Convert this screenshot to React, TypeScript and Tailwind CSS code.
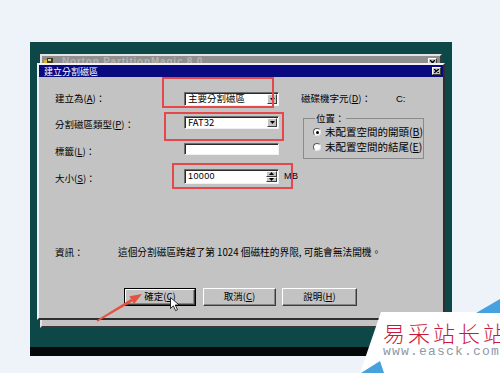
import React from "react";

const raised =
  "border border-t-white border-l-white border-b-[#3c3c3c] border-r-[#3c3c3c]";
const sunken =
  "border border-t-[#6e6e6e] border-l-[#6e6e6e] border-b-[#f0f0f0] border-r-[#f0f0f0] shadow-[inset_1px_1px_0_#2a2a2a]";

function DownBtn() {
  return (
    <span
      className={`w-[10px] m-[1px] shrink-0 bg-[#c3c3c3] flex items-center justify-center ${raised}`}
    >
      <svg width="5" height="3" viewBox="0 0 5 3">
        <path d="M0 0h5L2.5 3z" fill="#000" />
      </svg>
    </span>
  );
}

function Combo({ text }: { text: string }) {
  return (
    <div className={`w-[95px] h-full shrink-0 flex bg-white ${sunken}`}>
      <span className="flex-1 pl-[3px] text-[9.5px] leading-none self-center whitespace-nowrap">
        {text}
      </span>
      <DownBtn />
    </div>
  );
}

function Label({
  children,
  shift,
}: {
  children: React.ReactNode;
  shift?: boolean;
}) {
  return (
    <span
      className={`w-[129px] shrink-0 text-[9.5px] leading-none whitespace-nowrap ${
        shift ? "pt-[5px]" : ""
      }`}
    >
      {children}
    </span>
  );
}

function Radio({ on, children }: { on?: boolean; children: React.ReactNode }) {
  return (
    <div className="h-[14px] flex items-center">
      <span className="w-[8px] h-[8px] shrink-0 rounded-full bg-white border border-t-[#5a5a5a] border-l-[#5a5a5a] border-b-[#e8e8e8] border-r-[#e8e8e8] flex items-center justify-center">
        {on && <span className="w-[3px] h-[3px] rounded-full bg-black" />}
      </span>
      <span className="ml-[4px] text-[10.5px] leading-none whitespace-nowrap">
        {children}
      </span>
    </div>
  );
}

function Button({
  children,
  w,
  def,
  className = "",
}: {
  children: React.ReactNode;
  w: string;
  def?: boolean;
  className?: string;
}) {
  return (
    <div
      className={`${w} h-[18px] shrink-0 ${
        def ? "border border-black" : ""
      } ${className}`}
    >
      <div
        className={`h-full flex items-center justify-center bg-[#c3c3c3] ${raised} shadow-[inset_-1px_-1px_0_#858585]`}
      >
        <span className="text-[9.5px] leading-none whitespace-nowrap">
          {children}
        </span>
      </div>
    </div>
  );
}

export default function App() {
  return (
    <div className="relative w-[500px] h-[373px] overflow-hidden bg-[#edf3f9] font-['Noto_Sans_CJK_TC','Noto_Sans',sans-serif] text-black">
      <div className="pt-[42px] pl-[30px]">
        <div className="relative w-[422px] h-[305px] bg-[#0e4747]">
          {/* back window */}
          <div className="absolute left-[10px] top-[12px] w-[402px] h-[274px] bg-[#c3c3c3] border-2 border-t-[#e4e4e4] border-l-[#e4e4e4] border-b-[#383838] border-r-[#383838]">
            <div className="h-[12px] bg-[#8f8f8f] flex items-center px-[2px]">
              <svg width="9" height="8" viewBox="0 0 9 8">
                <rect x="0" y="2" width="5" height="5" fill="#d9b830" />
                <rect x="3" y="0" width="6" height="5" fill="#3b3b2a" />
                <rect x="4" y="1" width="3" height="2" fill="#e9d27a" />
              </svg>
              <span className="ml-[9px] text-[10px] leading-none text-[#b3b3b3] font-['Liberation_Sans',sans-serif] font-bold tracking-[0.8px] whitespace-nowrap">
                Norton PartitionMagic 8.0
              </span>
              <span
                className={`ml-auto mr-[1px] w-[9px] h-[9px] bg-[#c3c3c3] flex items-center justify-center ${raised}`}
              >
                <svg width="5" height="5" viewBox="0 0 5 5">
                  <path d="M0 0L5 5M5 0L0 5" stroke="#000" strokeWidth="1.3" />
                </svg>
              </span>
            </div>
          </div>

          {/* dialog */}
          <div className="absolute left-[7px] top-[21px] w-[408px] h-[257px] bg-[#c3c3c3] border-2 border-t-[#f2f2f2] border-l-[#f2f2f2] border-b-[#2e2e2e] border-r-[#2e2e2e] flex flex-col">
            <div className="h-[12px] shrink-0 bg-[#0a0a80] flex items-center pl-[5px] pr-[2px]">
              <span className="text-white text-[9px] leading-none whitespace-nowrap">
                建立分割磁區
              </span>
              <span
                className={`ml-auto w-[9px] h-[8px] bg-[#c3c3c3] flex items-center justify-center ${raised}`}
              >
                <svg width="5" height="4" viewBox="0 0 5 4">
                  <path d="M0 0L5 4M5 0L0 4" stroke="#000" strokeWidth="1.3" />
                </svg>
              </span>
            </div>

            <div className="flex-1 pt-[15px] pl-[16px]">
              <div className="flex">
                {/* left column */}
                <div className="w-[224px] shrink-0 flex flex-col">
                  <div className="h-[14px] flex items-center">
                    <Label>
                      建立為(<u>A</u>)：
                    </Label>
                    <Combo text="主要分割磁區" />
                  </div>
                  <div className="mt-[10px] h-[13px] flex items-center">
                    <Label shift>
                      分割磁區類型(<u>P</u>)：
                    </Label>
                    <Combo text="FAT32" />
                  </div>
                  <div className="mt-[14px] h-[12px] flex items-center">
                    <Label shift>
                      標籤(<u>L</u>)：
                    </Label>
                    <div className={`w-[95px] h-full shrink-0 bg-white ${sunken}`} />
                  </div>
                  <div className="mt-[14px] h-[15px] flex items-center">
                    <Label shift>
                      大小(<u>S</u>)：
                    </Label>
                    <div className={`w-[95px] h-full shrink-0 flex bg-white ${sunken}`}>
                      <span className="flex-1 pl-[3px] text-[9px] leading-none self-center font-['Liberation_Sans',sans-serif] tracking-[0.4px]">
                        10000
                      </span>
                      <span className="w-[11px] shrink-0 m-[1px] flex flex-col">
                        <span className={`flex-1 bg-[#c3c3c3] flex items-center justify-center ${raised}`}>
                          <svg width="5" height="3" viewBox="0 0 5 3">
                            <path d="M0 3h5L2.5 0z" fill="#000" />
                          </svg>
                        </span>
                        <span className={`flex-1 bg-[#c3c3c3] flex items-center justify-center ${raised}`}>
                          <svg width="5" height="3" viewBox="0 0 5 3">
                            <path d="M0 0h5L2.5 3z" fill="#000" />
                          </svg>
                        </span>
                      </span>
                    </div>
                    <span className="ml-[5px] shrink-0 text-[9px] leading-none font-['Liberation_Sans',sans-serif] tracking-[0.5px]">
                      MB
                    </span>
                  </div>
                </div>

                {/* right column */}
                <div className="ml-[22px] flex flex-col">
                  <div className="h-[14px] flex items-center">
                    <span className="w-[95px] shrink-0 text-[9.5px] leading-none whitespace-nowrap">
                      磁碟機字元(<u>D</u>)：
                    </span>
                    <span className="text-[9.5px] leading-none font-['Liberation_Sans',sans-serif]">
                      C:
                    </span>
                  </div>
                  <fieldset className="mt-[6px] ml-[2px] w-[121px] border border-[#8b8b8b] pl-[9px] pb-[4px]">
                    <legend className="ml-[2px] px-[1px] text-[9.5px] leading-[12px]">
                      位置：
                    </legend>
                    <div className="pt-[1px] flex flex-col gap-[1px]">
                      <Radio on>
                        未配置空間的開頭(<u>B</u>)
                      </Radio>
                      <Radio>
                        未配置空間的結尾(<u>E</u>)
                      </Radio>
                    </div>
                  </fieldset>
                </div>
              </div>

              {/* info */}
              <div className="mt-[62px] h-[14px] flex items-center">
                <span className="w-[63px] shrink-0 text-[9.5px] leading-none">資訊：</span>
                <span className="text-[9.7px] leading-none whitespace-nowrap">
                  這個分割磁區跨越了第 1024 個磁柱的界限, 可能會無法開機。
                </span>
              </div>

              {/* buttons */}
              <div className="mt-[28px] ml-[69px] flex">
                <Button w="w-[72px]" def>
                  確定(<u>C</u>)
                </Button>
                <Button w="w-[73px]" className="ml-[7px]">
                  取消(<u>C</u>)
                </Button>
                <Button w="w-[75px]" className="ml-[6px]">
                  說明(<u>H</u>)
                </Button>
              </div>
            </div>

            {/* red annotation boxes */}
            <div className="absolute left-[123px] top-[12px] w-[112px] h-[31px] border-2 border-[#e4484d]" />
            <div className="absolute left-[125px] top-[47px] w-[120px] h-[29px] border-2 border-[#e4484d]" />
            <div className="absolute left-[133px] top-[98px] w-[121px] h-[26px] border-2 border-[#e4484d]" />
          </div>
        </div>
        <div className="w-[422px] h-[9px] bg-[#060909]" />
      </div>

      {/* arrow, cursor, watermark overlay */}
      <svg
        className="absolute left-0 top-0 pointer-events-none"
        width="500"
        height="373"
        viewBox="0 0 500 373"
      >
        <polygon
          points="96.6,320.3 130.9,298.9 132.5,301.5 97.4,321.7"
          fill="#e8503f"
        />
        <polygon points="142,294 134,304.1 129.4,296.3" fill="#e8503f" />
        <path
          d="M170.5 297.5v11l2.8-2.7 2.3 4.8 1.9-0.9-2.3-4.7h3.9z"
          fill="#fff"
          stroke="#000"
          strokeWidth="0.8"
          strokeLinejoin="round"
        />
        <polygon points="381,312 500,312 500,373 360,373" fill="#ffffff" />
        <polygon points="476,313 500,299 500,313" fill="#45a2df" />
        <polygon points="361,373 380,361 384,373" fill="#45a2df" />
      </svg>
      <div className="absolute left-[383px] top-[320px] text-[22px] leading-[24px] tracking-[3px] text-[#c8193c] font-extralight whitespace-nowrap font-['Noto_Sans_CJK_SC',sans-serif]">
        易采站长站
      </div>
      <div className="absolute left-[383px] top-[345px] text-[13px] leading-[13px] tracking-[1.2px] text-[#8d99a5] whitespace-nowrap font-['Liberation_Mono',monospace]">
        www.easck.com
      </div>
    </div>
  );
}
